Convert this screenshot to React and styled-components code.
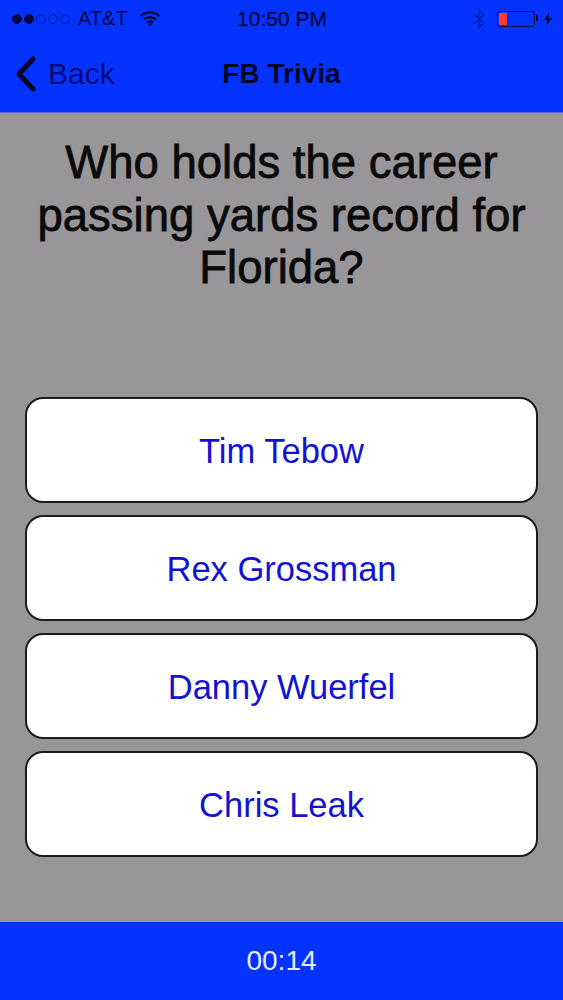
import React from 'react'
import styled, { createGlobalStyle } from 'styled-components'

const answers = ['Tim Tebow', 'Rex Grossman', 'Danny Wuerfel', 'Chris Leak']

const GlobalStyle = createGlobalStyle`
  html, body { margin: 0; padding: 0; }
  body { font-family: "Liberation Sans", Arial, sans-serif; background: #989698; }
`

const Screen = styled.div`
  width: 563px;
  height: 1000px;
  display: flex;
  flex-direction: column;
  background: #989698;
  overflow: hidden;
`

const Header = styled.header`
  height: 113px;
  flex: none;
  background: #0433ff;
  border-bottom: 1px solid #5a6ad0;
  box-sizing: border-box;
  display: flex;
  flex-direction: column;
  color: #05083c;
`

const StatusBar = styled.div`
  height: 37px;
  padding: 0 11px 0 12px;
  display: grid;
  grid-template-columns: 1fr auto 1fr;
  align-items: center;
  font-size: 20px;
  color: #06093f;
`

const StatusLeft = styled.div`
  display: flex;
  align-items: center;
`

const Carrier = styled.span`
  margin-left: 8px;
`

const Dots = styled.div`
  display: flex;
  gap: 2px;
`

const Dot = styled.span`
  width: 10px;
  height: 10px;
  border-radius: 50%;
  box-sizing: border-box;
  border: 1px solid #06093f;
  background: ${p => (p.$on ? '#06093f' : 'transparent')};
  opacity: ${p => (p.$on ? 1 : 0.55)};
`

const WifiIcon = styled.svg`
  width: 22px;
  height: 17px;
  margin-left: 11px;
`

const Clock = styled.span`
  font-size: 21px;
  -webkit-text-stroke: 0.3px #06093f;
`

const StatusRight = styled.div`
  display: flex;
  align-items: center;
  justify-content: flex-end;
`

const BluetoothIcon = styled.svg`
  width: 12px;
  height: 22px;
  opacity: 0.35;
  margin-right: 12px;
`

const Battery = styled.div`
  width: 38px;
  height: 16px;
  box-sizing: border-box;
  border: 1px solid #07094a;
  border-radius: 3px;
  padding: 1px;
  display: flex;
  position: relative;
  &::after {
    content: '';
    position: absolute;
    right: -4px;
    top: 3.5px;
    width: 2px;
    height: 6px;
    background: #07094a;
  }
`

const BatteryLevel = styled.div`
  width: 8px;
  background: #ff3b30;
  border-radius: 1px;
`

const BoltIcon = styled.svg`
  width: 8px;
  height: 16px;
  margin-left: 9px;
`

const NavBar = styled.nav`
  flex: 1;
  position: relative;
  display: flex;
  align-items: center;
  justify-content: center;
  padding-bottom: 2px;
`

const BackLink = styled.div`
  position: absolute;
  left: 15px;
  top: 19px;
  display: flex;
  align-items: center;
  gap: 12px;
  font-size: 30px;
  color: #040a78;
`

const ChevronIcon = styled.svg`
  width: 21px;
  height: 36px;
`

const Title = styled.h1`
  margin: 0;
  font-size: 28px;
  font-weight: 700;
  color: #03062c;
`

const Body = styled.main`
  flex: 1;
  display: flex;
  flex-direction: column;
  padding: 24px 25px 0;
`

const Question = styled.h2`
  margin: 0;
  height: 260px;
  font-size: 45.5px;
  line-height: 52.5px;
  font-weight: 400;
  -webkit-text-stroke: 0.8px #0a0a0a;
  color: #0a0a0a;
  text-align: center;
`

const Answers = styled.div`
  display: flex;
  flex-direction: column;
  gap: 12px;
`

const Answer = styled.button`
  height: 106px;
  border: 2px solid #1c1c1c;
  border-radius: 18px;
  background: #fff;
  font-family: inherit;
  font-size: 34.5px;
  color: #1212d6;
  padding: 2px 0 0;
`

const Footer = styled.footer`
  height: 78px;
  flex: none;
  background: #0433ff;
  display: flex;
  align-items: center;
  justify-content: center;
  color: #e6ecff;
  font-size: 28px;
`

export default function App() {
  return (
    <>
      <GlobalStyle />
      <Screen>
        <Header>
          <StatusBar>
            <StatusLeft>
              <Dots>
                {[1, 1, 0, 0, 0].map((on, i) => (
                  <Dot key={i} $on={!!on} />
                ))}
              </Dots>
              <Carrier>AT&amp;T</Carrier>
              <WifiIcon viewBox="0 0 23 18" fill="none" stroke="#06093f" strokeWidth="2.6">
                <path d="M1.5 6.5c5.5-5 14.5-5 20 0" />
                <path d="M5 10c3.6-3.2 9.4-3.2 13 0" />
                <path d="M8.4 13.3c1.8-1.5 4.4-1.5 6.2 0" />
                <path d="M11.5 17.5l-2.4-2.7c1.4-1 3.4-1 4.8 0z" fill="#06093f" stroke="none" />
              </WifiIcon>
            </StatusLeft>
            <Clock>10:50 PM</Clock>
            <StatusRight>
              <BluetoothIcon viewBox="0 0 13 22" fill="none" stroke="#06093f" strokeWidth="1.8">
                <path d="M1.5 6l10 9.5-5 5V1.5l5 5-10 9.5" />
              </BluetoothIcon>
              <Battery>
                <BatteryLevel />
              </Battery>
              <BoltIcon viewBox="0 0 9 16" fill="#06093f">
                <path d="M6 0L0 9h3.4L2.6 16 9 6.5H5.2z" />
              </BoltIcon>
            </StatusRight>
          </StatusBar>
          <NavBar>
            <BackLink>
              <ChevronIcon viewBox="0 0 21 36" fill="none" stroke="#03062c" strokeWidth="5" strokeLinecap="round" strokeLinejoin="round">
                <path d="M18 3L4 18l14 15" />
              </ChevronIcon>
              Back
            </BackLink>
            <Title>FB Trivia</Title>
          </NavBar>
        </Header>
        <Body>
          <Question>Who holds the career passing yards record for Florida?</Question>
          <Answers>
            {answers.map(a => (
              <Answer key={a}>{a}</Answer>
            ))}
          </Answers>
        </Body>
        <Footer>00:14</Footer>
      </Screen>
    </>
  )
}
